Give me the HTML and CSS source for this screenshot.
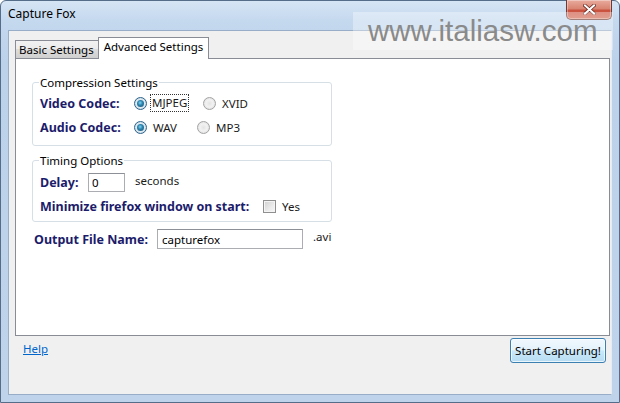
FILE: index.html
```html
<!DOCTYPE html>
<html>
<head>
<meta charset="utf-8">
<link rel="stylesheet" href="styles.css">
</head>
<body>
<div class="window">
  <div class="titlebar">
    <span class="title">Capture Fox</span>
    <div class="close">
      <svg width="13" height="11" viewBox="0 0 13 11">
        <path d="M2 1.5 L11 9.5 M11 1.5 L2 9.5" stroke="#6b2a22" stroke-width="3.6" stroke-linecap="square"/>
        <path d="M2 1.5 L11 9.5 M11 1.5 L2 9.5" stroke="#ffffff" stroke-width="2" stroke-linecap="square"/>
      </svg>
    </div>
  </div>
  <div class="client">
    <div class="tabs">
      <div class="tab">Basic Settings</div>
      <div class="tab active">Advanced Settings</div>
    </div>
    <div class="panel">
      <fieldset class="group group-compression">
        <legend>Compression Settings</legend>
        <div class="row">
          <span class="lbl lbl-codec">Video Codec:</span>
          <span class="opt opt-mjpeg"><span class="radio checked"></span><span class="focus">MJPEG</span></span>
          <span class="opt"><span class="radio"></span><span class="opt-text">XVID</span></span>
        </div>
        <div class="row">
          <span class="lbl lbl-codec">Audio Codec:</span>
          <span class="opt opt-wav"><span class="radio checked"></span><span class="opt-text">WAV</span></span>
          <span class="opt"><span class="radio"></span><span class="opt-text">MP3</span></span>
        </div>
      </fieldset>
      <fieldset class="group group-timing">
        <legend>Timing Options</legend>
        <div class="row">
          <span class="lbl lbl-delay">Delay:</span>
          <span class="textbox textbox-delay">0</span>
          <span class="unit unit-seconds">seconds</span>
        </div>
        <div class="row">
          <span class="lbl lbl-min">Minimize firefox window on start:</span>
          <span class="checkbox"></span>
          <span class="opt-text">Yes</span>
        </div>
      </fieldset>
      <div class="row row-output">
        <span class="lbl lbl-output">Output File Name:</span>
        <span class="textbox textbox-output">capturefox</span>
        <span class="unit unit-avi">.avi</span>
      </div>
    </div>
    <div class="footer">
      <a class="help">Help</a>
      <button class="start">Start Capturing!</button>
    </div>
  </div>
  <div class="watermark">www.italiasw.com</div>
</div>
</body>
</html>
```
FILE: styles.css
```css
* { box-sizing: border-box; }
html, body { margin: 0; padding: 0; }
body {
  width: 620px;
  height: 403px;
  overflow: hidden;
  font-family: "Noto Sans", "Open Sans", sans-serif;
  font-size: 11.5px;
  color: #1a1a1a;
}
.window {
  position: relative;
  width: 620px;
  height: 403px;
  display: flex;
  flex-direction: column;
  border: 1px solid #566d89;
  border-radius: 6px 6px 0 0;
  background: linear-gradient(180deg, #d6e5f5 0px, #c4d8ee 20px, #bcd2ea 60px, #bfd4eb 100%);
}
.titlebar {
  position: relative;
  height: 29px;
  flex: none;
}
.title {
  display: block;
  padding: 5px 0 0 7px;
  font-size: 12px;
  line-height: 16px;
  color: #000;
}
.close {
  position: absolute;
  top: -1px;
  right: 7px;
  width: 46px;
  height: 20px;
  border: 1px solid #6e3a33;
  border-top: none;
  border-radius: 0 0 5px 5px;
  background: linear-gradient(180deg, #e8ab9d 0%, #d98573 45%, #c9513e 55%, #d26a52 100%);
  box-shadow: inset 0 0 0 1px rgba(255,255,255,0.35);
  display: flex;
  align-items: center;
  justify-content: center;
}
.client {
  flex: none;
  width: 604px;
  height: 365px;
  margin-left: 7px;
  border: 1px solid #98adc7;
  border-right-color: #e4ecf5;
  background: #f0f0f0;
  padding-top: 6px;
  display: flex;
  flex-direction: column;
}
.tabs {
  display: flex;
  align-items: flex-end;
  margin-left: 6px;
  margin-bottom: -1px;
  position: relative;
  z-index: 1;
}
.tab {
  height: 18px;
  margin-bottom: 1px;
  padding: 0 4px 0 3px;
  line-height: 17px;
  border: 1px solid #898c95;
  border-bottom: none;
  background: linear-gradient(180deg, #f2f2f2 0%, #ebebeb 50%, #dddddd 50%, #cfcfcf 100%);
  color: #000;
  white-space: nowrap;
}
.tab.active {
  height: 22px;
  margin-bottom: 0;
  margin-left: -1px;
  padding: 1px 5px 4px 5px;
  line-height: 16px;
  background: #ffffff;
}
.panel {
  width: 595px;
  height: 278px;
  margin-left: 6px;
  border: 1px solid #898c95;
  background: #ffffff;
  padding: 16px 0 0 16px;
}
.group {
  width: 300px;
  margin: 0;
  padding: 3px 0 8px 7px;
  border: 1px solid #d5dfe5;
  border-radius: 3px;
  min-inline-size: 0;
}
.group legend {
  padding: 0 1px;
  margin-left: -1px;
  line-height: 15px;
  color: #000;
}
.group-timing {
  margin-top: 7px;
  padding: 4px 0 5px 7px;
}
.row {
  display: flex;
  align-items: center;
  height: 20px;
}
.row + .row { margin-top: 4px; }
.lbl {
  font-weight: bold;
  font-size: 12.5px;
  color: #1c1c6b;
  white-space: nowrap;
}
.lbl-codec { width: 94px; }
.lbl-delay { width: 48px; }
.lbl-min { width: 223px; }
.lbl-output { width: 123px; }
.opt {
  display: flex;
  align-items: center;
}
.opt-mjpeg { width: 69px; }
.opt-wav { width: 63px; }
.radio {
  position: relative;
  width: 13px;
  height: 13px;
  flex: none;
  border-radius: 50%;
  border: 1px solid #a3a3a3;
  background: radial-gradient(circle at 50% 50%, #e4e4e4 0%, #f2f2f2 45%, #d6d6d6 100%);
  margin-right: 6px;
}
.radio.checked {
  border-color: #2c628b;
  background: radial-gradient(circle at 50% 50%, #f4f8fb 0%, #dbe7ef 60%, #a9c0d0 100%);
}
.radio.checked::after {
  content: "";
  position: absolute;
  left: 2px;
  top: 2px;
  width: 7px;
  height: 7px;
  border-radius: 50%;
  background: radial-gradient(circle at 45% 40%, #7fd4f2 0%, #2c86b0 40%, #1b4d6b 100%);
}
.focus {
  border: 1px dotted #333;
  padding: 0 1px;
  margin-left: -3px;
  line-height: 16px;
}
.opt-text { color: #1a1a1a; }
.textbox {
  display: flex;
  align-items: center;
  height: 19px;
  border: 1px solid #abadb3;
  border-top-color: #8e9097;
  background: #fff;
  padding-left: 3px;
  color: #000;
}
.textbox-delay { width: 37px; }
.textbox-output { width: 146px; height: 20px; padding-left: 4px; }
.unit { color: #1a1a1a; }
.unit-seconds { margin-left: 10px; margin-top: -3px; }
.unit-avi { margin-left: 10px; margin-top: -5px; }
.checkbox {
  width: 13px;
  height: 13px;
  border: 1px solid #8f8f8f;
  background: linear-gradient(135deg, #d0d0d0 0%, #ebebeb 60%, #f6f6f6 100%);
  box-shadow: inset 0 0 0 1px #f4f4f4;
  margin-right: 6px;
}
.row-output {
  margin-top: 7px;
  padding-left: 2px;
}
.footer {
  display: flex;
  justify-content: space-between;
  align-items: flex-start;
  padding: 2px 5px 0 14px;
}
.help {
  color: #0066cc;
  text-decoration: underline;
  line-height: 16px;
  margin-top: 3px;
}
.start {
  width: 96px;
  height: 25px;
  font-family: inherit;
  font-size: 11.5px;
  color: #000;
  border: 1px solid #3c7fb1;
  border-radius: 3px;
  background: linear-gradient(180deg, #f1f8fd 0%, #e3f2fb 48%, #cbe8f8 52%, #b6dcf3 100%);
  box-shadow: inset 0 0 0 1px rgba(255,255,255,0.7);
  padding: 0;
}
.watermark {
  position: absolute;
  left: 352px;
  top: 11px;
  width: 260px;
  height: 38px;
  padding-left: 15px;
  background: rgba(255,255,255,0.35);
  font-family: "Liberation Sans", Arial, sans-serif;
  font-size: 29.5px;
  line-height: 38px;
  color: #8a8a8a;
  white-space: nowrap;
  pointer-events: none;
}
```
